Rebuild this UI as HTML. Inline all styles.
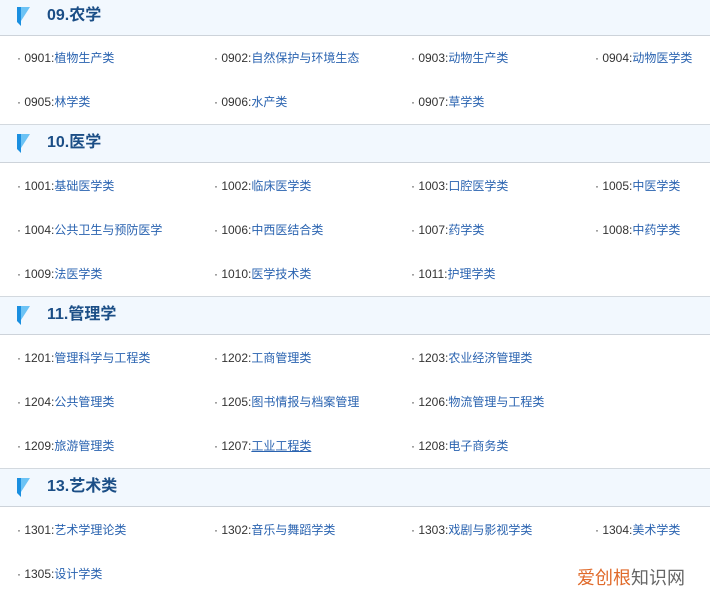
<!DOCTYPE html>
<html><head><meta charset="utf-8"><style>
body{margin:0;width:710px;height:593px;overflow:hidden;background:#fff;font-family:"Liberation Sans","Noto Sans CJK SC",sans-serif;position:relative}
.h{position:absolute;left:0;width:710px;height:39px;background:#f2f8fe;border-top:1px solid #d3d9df;border-bottom:1px solid #cdd3da;box-sizing:border-box}
.h svg{position:absolute;left:17px;top:9px}
.h span{position:absolute;left:47px;top:8px;font-size:16px;font-weight:bold;color:#1b4e86;line-height:19px}
.i{position:absolute;font-size:12px;color:#333;white-space:nowrap;line-height:14px}
.i b{font-weight:normal;color:#2a63b0}
.wm{position:absolute;left:577px;top:564px;font-size:18px;color:#666}
.wm em{font-style:normal;color:#e06a2a}
</style></head><body>
<div class="h" style="top:-2px;height:38px;border-top:none"><svg width="14" height="19" viewBox="0 0 14 19"><path d="M0 0H13L4 14V19Z" fill="#6cc3f5"/><path d="M0 0H4V19L0 15Z" fill="#1a8fe0"/></svg><span>09.农学</span></div>
<div class="i" style="left:17px;top:51px">· 0901:<b>植物生产类</b></div>
<div class="i" style="left:214px;top:51px">· 0902:<b>自然保护与环境生态</b></div>
<div class="i" style="left:411px;top:51px">· 0903:<b>动物生产类</b></div>
<div class="i" style="left:595px;top:51px">· 0904:<b>动物医学类</b></div>
<div class="i" style="left:17px;top:95px">· 0905:<b>林学类</b></div>
<div class="i" style="left:214px;top:95px">· 0906:<b>水产类</b></div>
<div class="i" style="left:411px;top:95px">· 0907:<b>草学类</b></div>

<div class="h" style="top:124px"><svg width="14" height="19" viewBox="0 0 14 19"><path d="M0 0H13L4 14V19Z" fill="#6cc3f5"/><path d="M0 0H4V19L0 15Z" fill="#1a8fe0"/></svg><span>10.医学</span></div>
<div class="i" style="left:17px;top:179px">· 1001:<b>基础医学类</b></div>
<div class="i" style="left:214px;top:179px">· 1002:<b>临床医学类</b></div>
<div class="i" style="left:411px;top:179px">· 1003:<b>口腔医学类</b></div>
<div class="i" style="left:595px;top:179px">· 1005:<b>中医学类</b></div>
<div class="i" style="left:17px;top:223px">· 1004:<b>公共卫生与预防医学</b></div>
<div class="i" style="left:214px;top:223px">· 1006:<b>中西医结合类</b></div>
<div class="i" style="left:411px;top:223px">· 1007:<b>药学类</b></div>
<div class="i" style="left:595px;top:223px">· 1008:<b>中药学类</b></div>
<div class="i" style="left:17px;top:267px">· 1009:<b>法医学类</b></div>
<div class="i" style="left:214px;top:267px">· 1010:<b>医学技术类</b></div>
<div class="i" style="left:411px;top:267px">· 1011:<b>护理学类</b></div>

<div class="h" style="top:296px"><svg width="14" height="19" viewBox="0 0 14 19"><path d="M0 0H13L4 14V19Z" fill="#6cc3f5"/><path d="M0 0H4V19L0 15Z" fill="#1a8fe0"/></svg><span>11.管理学</span></div>
<div class="i" style="left:17px;top:351px">· 1201:<b>管理科学与工程类</b></div>
<div class="i" style="left:214px;top:351px">· 1202:<b>工商管理类</b></div>
<div class="i" style="left:411px;top:351px">· 1203:<b>农业经济管理类</b></div>
<div class="i" style="left:17px;top:395px">· 1204:<b>公共管理类</b></div>
<div class="i" style="left:214px;top:395px">· 1205:<b>图书情报与档案管理</b></div>
<div class="i" style="left:411px;top:395px">· 1206:<b>物流管理与工程类</b></div>
<div class="i" style="left:17px;top:439px">· 1209:<b>旅游管理类</b></div>
<div class="i" style="left:214px;top:439px">· 1207:<b style="text-decoration:underline">工业工程类</b></div>
<div class="i" style="left:411px;top:439px">· 1208:<b>电子商务类</b></div>

<div class="h" style="top:468px"><svg width="14" height="19" viewBox="0 0 14 19"><path d="M0 0H13L4 14V19Z" fill="#6cc3f5"/><path d="M0 0H4V19L0 15Z" fill="#1a8fe0"/></svg><span>13.艺术类</span></div>
<div class="i" style="left:17px;top:523px">· 1301:<b>艺术学理论类</b></div>
<div class="i" style="left:214px;top:523px">· 1302:<b>音乐与舞蹈学类</b></div>
<div class="i" style="left:411px;top:523px">· 1303:<b>戏剧与影视学类</b></div>
<div class="i" style="left:595px;top:523px">· 1304:<b>美术学类</b></div>
<div class="i" style="left:17px;top:567px">· 1305:<b>设计学类</b></div>
<div class="wm"><em>爱创根</em>知识网</div>
</body></html>
